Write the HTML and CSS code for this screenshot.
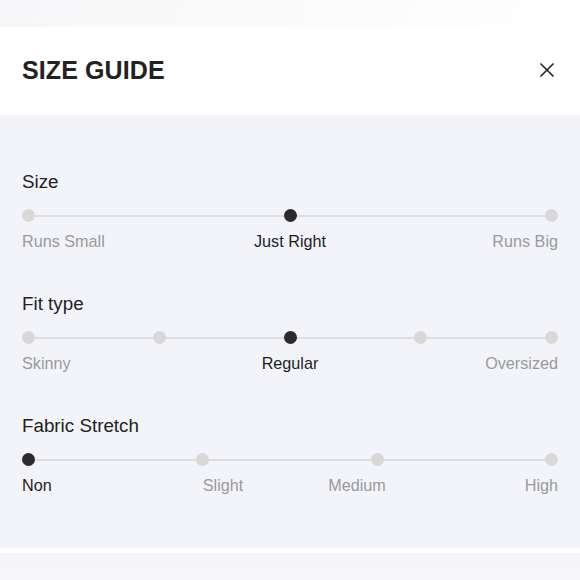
FILE: index.html
```html
<!DOCTYPE html>
<html lang="en">
<head>
<meta charset="utf-8">
<title>Size Guide</title>
<link rel="stylesheet" href="styles.css">
</head>
<body>
<div class="backdrop-top"></div>
<div class="modal">
  <header class="modal-header">
    <h1 class="title">SIZE GUIDE</h1>
    <button class="close" aria-label="Close">
      <svg width="16" height="16" viewBox="0 0 16 16"><path d="M1.5 1.5 L14.5 14.5 M14.5 1.5 L1.5 14.5" stroke="#222" stroke-width="1.6" fill="none"/></svg>
    </button>
  </header>
  <main class="modal-body">
    <section class="scale">
      <h2 class="scale-title">Size</h2>
      <div class="track">
        <span class="dot"></span><span class="dot active"></span><span class="dot"></span>
      </div>
      <div class="labels cols-3">
        <span>Runs Small</span><span class="active">Just Right</span><span>Runs Big</span>
      </div>
    </section>
    <section class="scale">
      <h2 class="scale-title">Fit type</h2>
      <div class="track">
        <span class="dot"></span><span class="dot"></span><span class="dot active"></span><span class="dot"></span><span class="dot"></span>
      </div>
      <div class="labels cols-3">
        <span>Skinny</span><span class="active">Regular</span><span>Oversized</span>
      </div>
    </section>
    <section class="scale">
      <h2 class="scale-title">Fabric Stretch</h2>
      <div class="track">
        <span class="dot active"></span><span class="dot"></span><span class="dot"></span><span class="dot"></span>
      </div>
      <div class="labels cols-4">
        <span class="active">Non</span><span>Slight</span><span>Medium</span><span>High</span>
      </div>
    </section>
  </main>
  <div class="modal-footer-gap"></div>
</div>
<div class="backdrop-bottom"></div>
</body>
</html>
```
FILE: styles.css
```css
* { box-sizing: border-box; }
html, body { margin: 0; padding: 0; }
body {
  width: 580px;
  height: 580px;
  overflow: hidden;
  background: #ffffff;
  font-family: "Liberation Sans", Arial, sans-serif;
  color: #222;
}
.backdrop-top {
  height: 27px;
  background: linear-gradient(100deg, #f7f7f9 0%, #fafafb 45%, #ffffff 100%);
}
.modal-header {
  height: 88px;
  background: #fff;
  display: flex;
  align-items: center;
  justify-content: space-between;
  padding: 0 22px;
}
.title {
  margin: 0;
  font-size: 25px;
  font-weight: 700;
  letter-spacing: 0.1px;
  color: #222;
  line-height: 30px;
  position: relative;
  top: -1px;
}
.close {
  border: 0;
  background: transparent;
  padding: 0;
  width: 16px;
  height: 16px;
  margin-right: 3px;
  display: flex;
  position: relative;
  top: -1px;
}
.modal-body {
  background: #f3f4f9;
  padding: 56px 22px 52px;
  display: flex;
  flex-direction: column;
  gap: 41px;
}
.scale-title {
  margin: 0 0 16px;
  font-size: 18.8px;
  font-weight: 400;
  line-height: 22px;
  color: #222;
}
.track {
  position: relative;
  display: flex;
  justify-content: space-between;
  align-items: center;
  height: 13px;
}
.track::before {
  content: "";
  position: absolute;
  left: 6px;
  right: 6px;
  top: 5.5px;
  height: 2px;
  background: #dedede;
}
.dot {
  position: relative;
  width: 13px;
  height: 13px;
  border-radius: 50%;
  background: #d8d8d8;
}
.dot.active { background: #2b2b2b; }
.labels {
  display: grid;
  margin-top: 9px;
  margin-bottom: 1px;
  font-size: 16.2px;
  line-height: 20px;
  color: #9a9a9a;
  text-align: center;
}
.labels.cols-3 { grid-template-columns: repeat(3, 1fr); }
.labels.cols-4 { grid-template-columns: repeat(4, 1fr); }
.labels span:first-child { text-align: left; }
.labels span:last-child { text-align: right; }
.labels .active { color: #1e1e1e; }
.modal-footer-gap {
  height: 5px;
  background: #fff;
}
.backdrop-bottom {
  height: 40px;
  background: linear-gradient(180deg, #f5f5f8 0%, #f7f7fb 100%);
}
```
